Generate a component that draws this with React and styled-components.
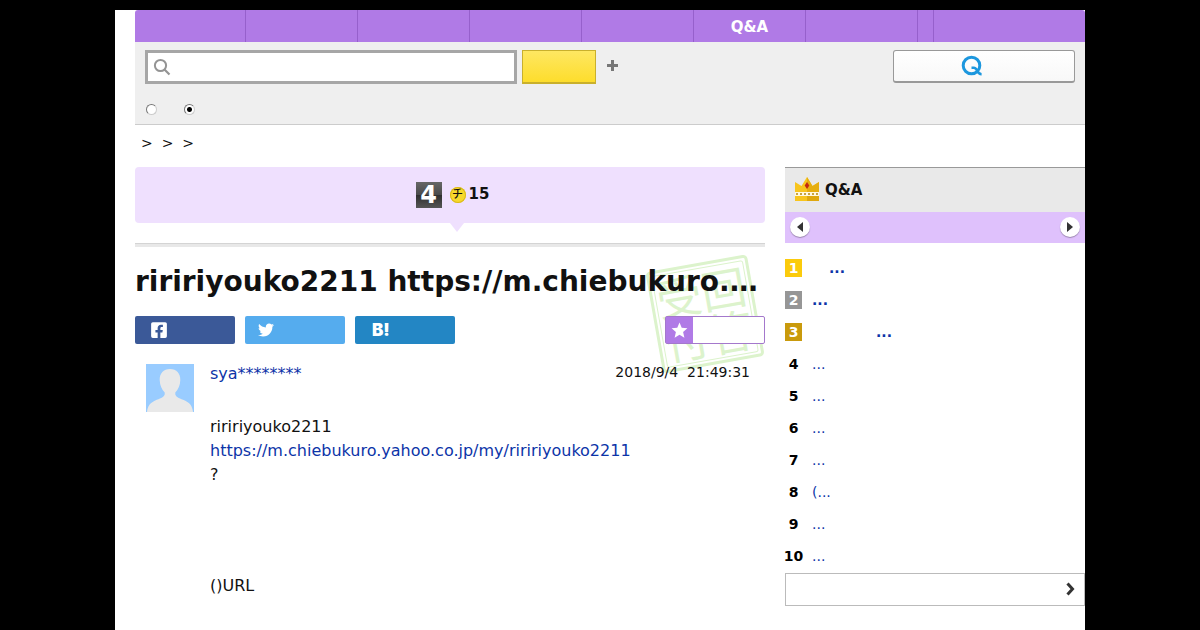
import styled, { createGlobalStyle } from "styled-components";
import { FaFacebookSquare, FaTwitter } from "react-icons/fa";
import { MdStar } from "react-icons/md";

const Colors = {
  purple: "#b07ae6",
  purpleLine: "#9660cc",
  lilac: "#efe0fe",
  link: "#0c34a8",
  text: "#111",
};

const tabs = [
  { id: "top", width: 111 },
  { id: "categories", width: 112 },
  { id: "open", width: 112 },
  { id: "ranking", width: 112 },
  { id: "experts", width: 112 },
  { id: "qa", width: 112, label: "Q&A" },
  { id: "guide", width: 112 },
  { id: "more", width: 16 },
];

const ranking = [
  { rank: 1, text: "...", color: "#fbcb0c", indent: 17 },
  { rank: 2, text: "...", color: "#969696", indent: 0 },
  { rank: 3, text: "...", color: "#c99a0c", indent: 64 },
  { rank: 4, text: "..." },
  { rank: 5, text: "..." },
  { rank: 6, text: "..." },
  { rank: 7, text: "..." },
  { rank: 8, text: "(..." },
  { rank: 9, text: "..." },
  { rank: 10, text: "..." },
];

const SearchIcon = () => (
  <svg width="18" height="18" viewBox="0 0 18 18" fill="none" stroke="#949494">
    <circle cx="7.5" cy="7.5" r="5.6" strokeWidth="2" />
    <path d="M11.5 11.5L16.5 16.5" strokeWidth="2.2" />
  </svg>
);

const PlusIcon = () => (
  <svg width="11" height="11" viewBox="0 0 11 11">
    <path d="M4 0h3v4h4v3H7v4H4V7H0V4h4z" fill="#777" />
  </svg>
);

const QuestionLogo = () => (
  <svg width="22" height="22" viewBox="0 0 22 22" fill="none" stroke="#1c97de">
    <circle cx="10.5" cy="10.5" r="8.3" strokeWidth="3" />
    <path d="M10.5 12.7h2.2c2 0 2.6 1 3.4 2.8.7 1.7 1.5 3.7 4.500 3.700" strokeWidth="2.6" />
  </svg>
);

const Crown = () => (
  <svg width="24" height="24" viewBox="0 0 24 24">
    <path d="M0 5l6.5 4L12 0l5.5 9L24 5v10H0z" fill="#f8c51c" />
    <path d="M12 0l5.5 9L24 5v10H12z" fill="#e6ae10" />
    <path d="M0 15h24v5H0z" fill="#fff8e0" />
    <path d="M0 19h24v5H0z" fill="#f8c51c" />
    <path d="M12 19h12v5H12z" fill="#dfa80e" />
    <path d="M1 17h22" stroke="#c8a440" strokeWidth="2" strokeDasharray="2 2" />
    <path d="M12 5l2.3 3.5L12 12l-2.3-3.5z" fill="#c4280f" />
  </svg>
);

const Person = () => (
  <svg width="48" height="48" viewBox="0 0 48 48">
    <path fill="#99ccff" d="M0 0h48v48H0z" />
    <path
      fill="#e9e9e9"
      d="M24 5c6.5 0 10.5 4.5 10.3 11-.1 5-2 9.5-5 12.5v2c1 3 5 4 9.5 6 5 2.2 7.5 5.5 8.2 11.5H1c.7-6 3.2-9.3 8.2-11.5 4.5-2 8.5-3 9.5-6v-2c-3-3-4.9-7.5-5-12.5C13.5 9.5 17.5 5 24 5z"
    />
  </svg>
);

const Stamp = () => (
  <StampSvg width="120" height="120" viewBox="0 0 120 120">
    <g transform="rotate(-10 60 60)" fill="none" stroke="#dcf3cc">
      <rect x="10" y="10" width="100" height="100" rx="3" strokeWidth="3" />
      <rect x="14" y="14" width="92" height="92" rx="2" strokeWidth="1" />
      <g fill="#dcf3cc" stroke="none">
        <text x="15" y="56">受</text>
        <text x="60" y="56">回</text>
        <text x="15" y="100">付</text>
        <text x="60" y="100">答</text>
      </g>
    </g>
  </StampSvg>
);

const Header = () => (
  <header>
    <Nav>
      {tabs.map((tab) => (
        <Tab key={tab.id} href="#" aria-label={tab.label || tab.id} $width={tab.width}>
          {tab.label}
        </Tab>
      ))}
    </Nav>
    <SearchArea>
      <SearchRow>
        <SearchBox>
          <SearchIcon />
          <input type="text" aria-label="Search" />
        </SearchBox>
        <SearchButton type="submit" aria-label="Search" />
        <PlainButton type="button" aria-label="More search options">
          <PlusIcon />
        </PlainButton>
        <AskButton type="button" aria-label="Ask a question">
          <QuestionLogo />
        </AskButton>
      </SearchRow>
      <Scopes>
        <Radio type="radio" name="scope" aria-label="Web" />
        <Radio type="radio" name="scope" aria-label="This site" defaultChecked />
      </Scopes>
    </SearchArea>
  </header>
);

const Question = () => (
  <Main>
    <Status>
      <Count>4</Count>
      <Coin>チ</Coin>
      <strong>15</strong>
    </Status>
    <Divider />
    <Article>
      <Stamp />
      <Title>riririyouko2211 https://m.chiebukuro.…</Title>
      <Shares>
        <Share type="button" aria-label="Facebook" $color="#3b5998" $pad={15}>
          <FaFacebookSquare size={18} />
        </Share>
        <Share type="button" aria-label="Twitter" $color="#55acee" $pad={13}>
          <FaTwitter size={16} />
        </Share>
        <Share type="button" $color="#2386c4" $pad={17}>
          B!
        </Share>
        <Favorite type="button" aria-label="Favorite">
          <span>
            <MdStar size={19} />
          </span>
        </Favorite>
      </Shares>
      <Post>
        <Person />
        <PostBody>
          <PostHeading>
            <a href="#">sya********</a>
            <time>2018/9/4{"\u00a0 "}21:49:31</time>
          </PostHeading>
          <p>
            riririyouko2211
            <br />
            <a href="#">https://m.chiebukuro.yahoo.co.jp/my/riririyouko2211</a>
            <br />?
          </p>
          <p>()URL</p>
        </PostBody>
      </Post>
    </Article>
  </Main>
);

const Sidebar = () => (
  <Aside>
    <AsideTitle>
      <Crown />
      Q&A
    </AsideTitle>
    <Pager>
      <Round type="button" aria-label="Previous">
        <svg width="6" height="10" viewBox="0 0 6 10">
          <path d="M6 0v10L0 5z" fill="#333" />
        </svg>
      </Round>
      <Round type="button" aria-label="Next">
        <svg width="6" height="10" viewBox="0 0 6 10">
          <path d="M0 0v10l6-5z" fill="#333" />
        </svg>
      </Round>
    </Pager>
    <RankList>
      {ranking.map((item) => (
        <RankRow key={item.rank}>
          <Rank $color={item.color}>{item.rank}</Rank>
          <RankLink href="#" $top={item.rank <= 3} $indent={item.indent}>
            {item.text}
          </RankLink>
        </RankRow>
      ))}
    </RankList>
    <MoreLink href="#" aria-label="See more">
      <svg width="9" height="14" viewBox="0 0 9 14" fill="none">
        <path d="M1.5 1.5L6.5 7l-5 5.5" stroke="#333" strokeWidth="3" />
      </svg>
    </MoreLink>
  </Aside>
);

export default function App() {
  return (
    <>
      <GlobalStyle />
      <Page>
        <Header />
        <Breadcrumb>&gt;&nbsp; &gt;&nbsp; &gt;</Breadcrumb>
        <Columns>
          <Question />
          <Sidebar />
        </Columns>
      </Page>
    </>
  );
}

const GlobalStyle = createGlobalStyle`
  * {
    box-sizing: border-box;
  }

  body {
    margin: 0;
    background: #000;
    color: ${Colors.text};
    font-family: "DejaVu Sans", "Noto Sans CJK JP", sans-serif;
    font-size: 16px;
  }

  a {
    color: ${Colors.link};
    text-decoration: none;
  }

  button {
    padding: 0;
    font-family: inherit;
    cursor: pointer;
  }

  svg {
    display: block;
    flex: none;
  }
`;

const Page = styled.div`
  max-width: 970px;
  min-height: calc(100vh - 10px);
  margin: 10px auto 0;
  padding-left: 20px;
  background: #fff;
`;

const Nav = styled.nav`
  display: flex;
  height: 32px;
  border-radius: 3px 3px 0 0;
  background: ${Colors.purple};
`;

const Tab = styled.a`
  width: ${(props) => props.$width}px;
  border-right: 1px solid ${Colors.purpleLine};
  color: #fff;
  font-size: 15px;
  font-weight: bold;
  line-height: 34px;
  text-align: center;
`;

const SearchArea = styled.form`
  padding: 8px 10px;
  border-bottom: 1px solid #ccc;
  background: #efefef;
`;

const SearchRow = styled.div`
  display: flex;
  align-items: flex-start;
`;

const SearchBox = styled.label`
  display: flex;
  align-items: center;
  width: 372px;
  height: 34px;
  padding-left: 5px;
  border: 3px solid #a6a6a6;
  background: #fff;

  input {
    flex: 1;
    min-width: 0;
    border: 0;
    outline: 0;
    background: none;
    font-size: 16px;
  }
`;

const SearchButton = styled.button`
  width: 74px;
  height: 34px;
  margin-left: 5px;
  border: 1px solid #c9b02c;
  border-bottom-width: 2px;
  background: linear-gradient(#fee762, #fddd2c);
`;

const PlainButton = styled.button`
  margin: 10px 11px;
  border: 0;
  background: none;
`;

const AskButton = styled.button`
  display: flex;
  align-items: center;
  width: 182px;
  height: 33px;
  margin-left: auto;
  padding-left: 67px;
  border: 1px solid #999;
  border-bottom-width: 2px;
  border-radius: 3px;
  background: linear-gradient(#fff, #f8f8f8);
`;

const Scopes = styled.div`
  display: flex;
  gap: 27px;
  padding: 20px 1px 1px;
`;

const Radio = styled.input`
  appearance: none;
  width: 11px;
  height: 11px;
  margin: 0;
  border: 1px solid;
  border-color: #777 #ccc #ccc #777;
  border-radius: 50%;
  background: #fff;

  &:checked {
    background: radial-gradient(circle, #000 2px, #fff 3px);
  }
`;

const Breadcrumb = styled.div`
  padding: 8px 6px 13px;
  font-size: 14px;
  line-height: 21px;
`;

const Columns = styled.div`
  display: flex;
  align-items: flex-start;
  gap: 20px;
`;

const Main = styled.main`
  flex: 1;
  min-width: 0;
`;

const Status = styled.div`
  position: relative;
  display: flex;
  align-items: center;
  justify-content: center;
  height: 56px;
  padding-left: 5px;
  border-radius: 4px;
  background: ${Colors.lilac};

  strong {
    padding-bottom: 2px;
    font-size: 15px;
  }

  &::after {
    content: "";
    position: absolute;
    top: 100%;
    left: 50%;
    border: 7px solid transparent;
    border-top: 9px solid ${Colors.lilac};
    border-bottom: 0;
  }
`;

const Count = styled.span`
  width: 26px;
  margin-right: 8px;
  background: linear-gradient(#666, #4a4a4a 50%, #2e2e2e 50%, #555);
  color: #fff;
  font-size: 24px;
  font-weight: bold;
  line-height: 26px;
  text-align: center;
`;

const Coin = styled.span`
  width: 16px;
  margin-right: 3px;
  border-radius: 50%;
  background: #f7d92c;
  box-shadow: inset 0 0 0 1px #d9b81c;
  font-size: 11px;
  font-weight: 500;
  line-height: 16px;
  text-align: center;
`;

const Divider = styled.hr`
  height: 4px;
  margin: 20px 0 0;
  border: 0;
  border-top: 1px solid #d4d4d4;
  background: #e8e8e8;
`;

const Article = styled.article`
  position: relative;
  z-index: 0;
`;

const StampSvg = styled.svg`
  position: absolute;
  z-index: -1;
  top: 7px;
  right: 0;

  text {
    font-family: "Noto Sans CJK JP", sans-serif;
    font-size: 45px;
  }
`;

const Title = styled.h1`
  margin: 0;
  padding: 15px 0 14px;
  font-size: 28px;
  line-height: 40px;
  white-space: nowrap;
`;

const Shares = styled.div`
  display: flex;
  gap: 10px;
`;

const Share = styled.button`
  display: flex;
  align-items: center;
  width: 100px;
  height: 28px;
  padding: 0 0 1px ${(props) => props.$pad}px;
  border: 0;
  border-radius: 2px;
  background: ${(props) => props.$color};
  color: #fff;
  font-family: Inter, sans-serif;
  font-size: 17px;
  font-weight: 900;
`;

const Favorite = styled.button`
  display: flex;
  width: 100px;
  height: 28px;
  margin-left: auto;
  border: 1px solid #a478cc;
  border-radius: 2px;
  background: #fff;

  span {
    display: flex;
    align-items: center;
    justify-content: center;
    width: 27px;
    height: 100%;
    background: ${Colors.purple};
    color: #fff;
  }
`;

const Post = styled.div`
  display: flex;
  gap: 16px;
  padding: 20px 15px 20px 11px;
`;

const PostBody = styled.div`
  flex: 1;

  p {
    margin: 0;
    line-height: 24px;
  }

  p + p {
    margin-top: 87px;
  }
`;

const PostHeading = styled.div`
  display: flex;
  justify-content: space-between;
  margin-bottom: 31px;
  line-height: 20px;

  time {
    font-size: 14px;
    line-height: 17px;
  }
`;

const Aside = styled.aside`
  width: 300px;
`;

const AsideTitle = styled.h2`
  display: flex;
  align-items: center;
  gap: 6px;
  height: 45px;
  margin: 0;
  padding-left: 10px;
  border-top: 1px solid #999;
  background: #e9e9e9;
  font-size: 15px;

  svg {
    margin-bottom: 3px;
  }
`;

const Pager = styled.div`
  display: flex;
  justify-content: space-between;
  height: 31px;
  padding: 5px;
  background: #dfc1fc;
`;

const Round = styled.button`
  display: flex;
  align-items: center;
  justify-content: center;
  width: 20px;
  height: 20px;
  border: 0;
  border-radius: 50%;
  background: #fff;
  box-shadow: 0 1px 1px rgba(0, 0, 0, 0.3);
`;

const RankList = styled.ol`
  display: grid;
  gap: 14px;
  margin: 0;
  padding: 16px 0 8px;
  list-style: none;
`;

const RankRow = styled.li`
  display: flex;
  gap: 10px;
  font-size: 14px;
  line-height: 18px;
`;

const Rank = styled.span`
  display: flex;
  flex: none;
  justify-content: center;
  width: 17px;
  background: ${(props) => props.$color || "none"};
  color: ${(props) => (props.$color ? "#fff" : "#000")};
  font-weight: bold;
`;

const RankLink = styled.a`
  padding-left: ${(props) => props.$indent || 0}px;
  font-weight: ${(props) => (props.$top ? "bold" : "normal")};
`;

const MoreLink = styled.a`
  display: flex;
  align-items: center;
  justify-content: flex-end;
  height: 33px;
  padding: 0 9px 2px;
  border: 1px solid #bbb;
`;
